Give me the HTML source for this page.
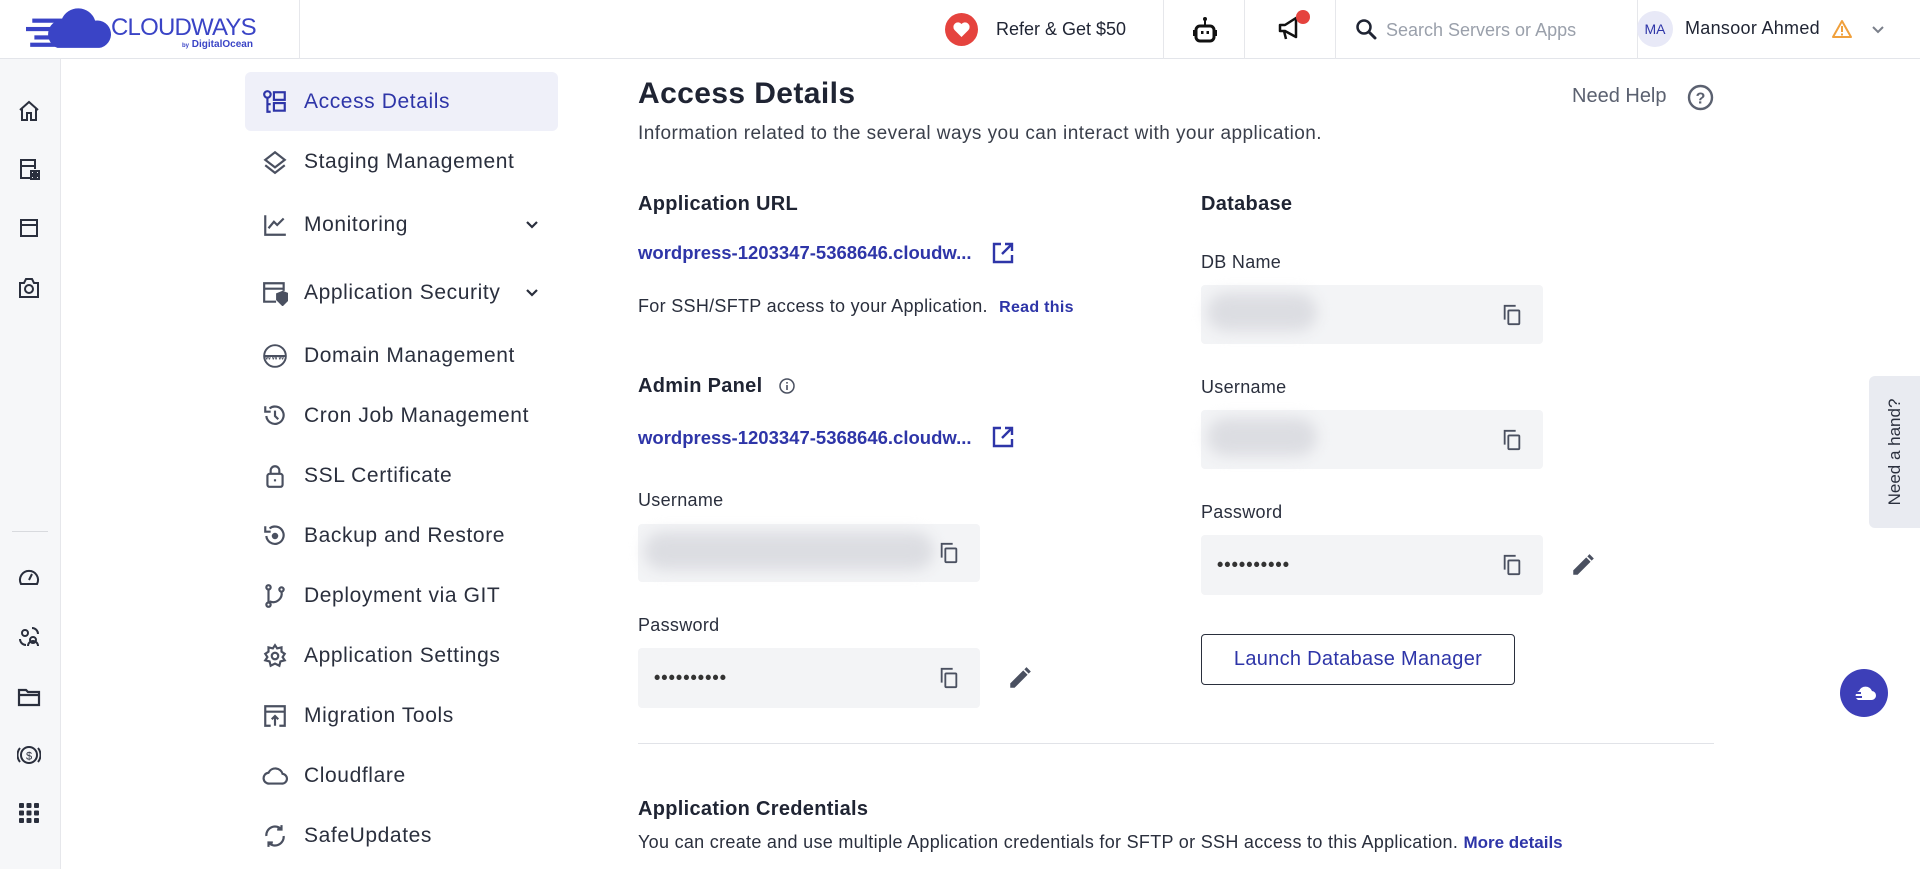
<!DOCTYPE html>
<html><head><meta charset="utf-8"><style>
*{box-sizing:border-box;margin:0;padding:0}
body{width:1920px;height:869px;overflow:hidden;background:#fff;font-family:"Liberation Sans",sans-serif;color:#1f2433;position:relative}
.abs{position:absolute}
.hdr{left:0;top:0;width:1920px;height:59px;border-bottom:1px solid #e3e5ea;background:#fff}
.vd{position:absolute;top:0;width:1px;height:59px;background:#e6e7eb}
.rail{left:0;top:59px;width:61px;height:810px;background:#f6f7f9;border-right:1px solid #e6e7eb}
.ri{position:absolute;left:17px;width:24px;height:24px}
.nav{left:245px;width:313px;height:59px;display:flex;align-items:center;font-size:21px;letter-spacing:0.6px;color:#2a2f3d}
.nav svg{width:26px;height:26px;margin:0 16px 0 17px;flex:none}
.nav .chev{position:absolute;right:18px;width:16px;height:16px;margin:0}
.lbl{font-size:18px;color:#2a2f3d;letter-spacing:0.3px}
.h3{font-size:20px;font-weight:bold;color:#1f2433;letter-spacing:0.3px}
.link{font-size:18.5px;color:#2e35a8;font-weight:bold}
.inp{background:#f3f4f6;border-radius:4px}
.blur{position:absolute;left:6px;top:8px;height:38px;border-radius:20px;background:#dcdde2;filter:blur(7px)}
.dots{position:absolute;left:16px;top:50%;transform:translateY(-50%);font-size:18px;letter-spacing:1px;color:#333;font-weight:bold}
.cp{position:absolute;right:20px;top:50%;transform:translateY(-50%);width:22px;height:22px}
</style></head><body>
<div class="abs hdr">
 <svg class="abs" style="left:26px;top:6px" width="88" height="44" viewBox="0 0 84 42"><path d="M30 40 A14 14 0 0 1 34 13 A17 17 0 0 1 66 14 A13 13 0 0 1 70 40 Z" fill="#3a44c6"/><rect x="6" y="12" width="30" height="4" fill="#3a44c6"/><rect x="0" y="20" width="28" height="4" fill="#3a44c6"/><rect x="8" y="28" width="24" height="4" fill="#3a44c6"/><rect x="4" y="35" width="28" height="4" fill="#3a44c6"/></svg>
 <div class="abs" style="left:111px;top:14px;font-size:24px;color:#3a44c6;letter-spacing:-0.8px">CLOUDWAYS</div>
 <div class="abs" style="left:182px;top:39px;font-size:10px;color:#3a44c6;font-weight:bold"><span style="font-size:6px">by</span> DigitalOcean</div>
 <div class="vd" style="left:299px"></div>
 <svg class="abs" style="left:945px;top:13px" width="33" height="33" viewBox="0 0 33 33"><circle cx="16.5" cy="16.5" r="16.5" fill="#e5433e"/><path d="M16.5 24 L9.5 17 A4 4 0 0 1 16.5 11 A4 4 0 0 1 23.5 17 Z" fill="#fff"/></svg>
 <div class="abs" style="left:996px;top:19px;font-size:18px;color:#1f2433">Refer &amp; Get $50</div>
 <div class="vd" style="left:1163px"></div>
 <svg class="abs" style="left:1193px;top:16px" width="24" height="28" viewBox="0 0 24 28"><circle cx="12" cy="3" r="2" fill="#111"/><rect x="11" y="4" width="2" height="6" fill="#111"/><rect x="3" y="10" width="18" height="15" rx="4" fill="none" stroke="#111" stroke-width="3"/><rect x="8" y="15" width="2.5" height="3" fill="#111"/><rect x="13.5" y="15" width="2.5" height="3" fill="#111"/><rect x="0" y="14" width="3" height="6" fill="#111"/><rect x="21" y="14" width="3" height="6" fill="#111"/></svg>
 <div class="vd" style="left:1244px"></div>
 <svg class="abs" style="left:1277px;top:10px" width="36" height="34" viewBox="0 0 36 34"><path d="M3 15 h5 l11-7 v19 l-11-6 h-5 z M7 21 l2 8" fill="none" stroke="#111" stroke-width="2.5" stroke-linejoin="round"/><circle cx="26" cy="7" r="7" fill="#e5433e"/></svg>
 <div class="vd" style="left:1335px"></div>
 <svg class="abs" style="left:1355px;top:18px" width="22" height="22" viewBox="0 0 22 22"><circle cx="9" cy="9" r="6.5" fill="none" stroke="#1f2433" stroke-width="2.5"/><path d="M14 14 L20 20" stroke="#1f2433" stroke-width="3" stroke-linecap="round"/></svg>
 <div class="abs" style="left:1386px;top:20px;font-size:18px;color:#9aa0ab">Search Servers or Apps</div>
 <div class="vd" style="left:1637px"></div>
 <div class="abs" style="left:1637px;top:11px;width:36px;height:36px;border-radius:50%;background:#e8e9f7;color:#2e35a8;font-size:14px;text-align:center;line-height:36px">MA</div>
 <div class="abs" style="left:1685px;top:18px;font-size:18px;color:#1f2433;letter-spacing:0.3px">Mansoor Ahmed</div>
 <svg class="abs" style="left:1831px;top:19px" width="22" height="20" viewBox="0 0 22 20"><path d="M11 2 L20 18 H2 Z" fill="none" stroke="#f0a03c" stroke-width="2" stroke-linejoin="round"/><rect x="10" y="7" width="2" height="6" fill="#f0a03c"/><rect x="10" y="14.5" width="2" height="2" fill="#f0a03c"/></svg>
 <svg class="abs" style="left:1871px;top:25px" width="14" height="10" viewBox="0 0 14 10"><path d="M2 2 L7 7 L12 2" fill="none" stroke="#7a7f8a" stroke-width="2"/></svg>
</div>

<div class="abs rail">
 <svg class="ri" style="top:40px" viewBox="0 0 24 24" fill="none" stroke="#2a2f3d" stroke-width="2"><path d="M3 11 L12 3 L21 11 M5 9 V21 H10 V14 H14 V21 H19 V9"/></svg>
 <svg class="ri" style="top:98px" viewBox="0 0 24 24" fill="none" stroke="#2a2f3d" stroke-width="2"><path d="M13 21 H4 V3 H18 V12 M4 9 H18"/><rect x="14" y="14" width="3" height="3"/><rect x="19" y="14" width="3" height="3"/><rect x="14" y="19" width="3" height="3"/><rect x="19" y="19" width="3" height="3"/></svg>
 <svg class="ri" style="top:157px" viewBox="0 0 24 24" fill="none" stroke="#2a2f3d" stroke-width="2"><rect x="4" y="4" width="16" height="16"/><path d="M4 9 H20"/></svg>
 <svg class="ri" style="top:217px" viewBox="0 0 24 24" fill="none" stroke="#2a2f3d" stroke-width="2"><path d="M3 7 H7 L9 3 H15 L17 7 H21 V21 H3 Z"/><circle cx="12" cy="13" r="4"/></svg>
 <div class="abs" style="left:12px;top:472px;width:36px;height:1px;background:#d8dade"></div>
 <svg class="ri" style="top:506px" viewBox="0 0 24 24" fill="none" stroke="#2a2f3d" stroke-width="2"><path d="M4 19 A9 9 0 1 1 20 19 Z M12 15 L15 9"/></svg>
 <svg class="ri" style="top:566px" viewBox="0 0 24 24" fill="none" stroke="#2a2f3d" stroke-width="2"><circle cx="8" cy="8" r="3"/><circle cx="16" cy="15" r="3"/><path d="M11 21 A5 5 0 0 1 21 21 M3 14 A6 6 0 0 0 9 20 M15 3 A6 6 0 0 1 21 9"/></svg>
 <svg class="ri" style="top:626px" viewBox="0 0 24 24" fill="none" stroke="#2a2f3d" stroke-width="2.2"><path d="M2 5 H9 L11 7 H22 V20 H2 Z M2 10 H22"/></svg>
 <svg class="ri" style="top:684px" viewBox="0 0 24 24" fill="none" stroke="#2a2f3d" stroke-width="2"><circle cx="12" cy="12" r="8"/><path d="M3 5 A11 11 0 0 0 3 19 M21 5 A11 11 0 0 1 21 19"/><text x="12" y="16.5" font-size="11" text-anchor="middle" fill="#2a2f3d" stroke="none" font-family="Liberation Sans">$</text></svg>
 <svg class="ri" style="top:742px" viewBox="0 0 24 24" fill="#2a2f3d"><rect x="2" y="2" width="5" height="5" rx="1"/><rect x="9.5" y="2" width="5" height="5" rx="1"/><rect x="17" y="2" width="5" height="5" rx="1"/><rect x="2" y="9.5" width="5" height="5" rx="1"/><rect x="9.5" y="9.5" width="5" height="5" rx="1"/><rect x="17" y="9.5" width="5" height="5" rx="1"/><rect x="2" y="17" width="5" height="5" rx="1"/><rect x="9.5" y="17" width="5" height="5" rx="1"/><rect x="17" y="17" width="5" height="5" rx="1"/></svg>
</div>

<div class="abs" style="left:245px;top:72px;width:313px;height:59px;background:#eff0f9;border-radius:6px"></div>
<div class="abs nav" style="top:72px;color:#2e35a8"><svg viewBox="0 0 24 24" fill="none" stroke="#2e35a8" stroke-width="2"><circle cx="5" cy="5" r="3"/><path d="M5 8 V21 H8 M5 14 H8"/><rect x="11" y="3" width="10" height="7"/><rect x="11" y="13" width="10" height="7"/></svg>Access Details</div>
<div class="abs nav" style="top:132px"><svg viewBox="0 0 24 24" fill="none" stroke="#4a5060" stroke-width="2"><path d="M12 3 L21 10 L12 17 L3 10 Z M3 15 L12 22 L21 15"/></svg>Staging Management</div>
<div class="abs nav" style="top:195px"><svg viewBox="0 0 24 24" fill="none" stroke="#4a5060" stroke-width="2"><path d="M3 3 V21 H22 M6 15 L11 9 L14 12 L20 6"/></svg>Monitoring<svg class="chev" viewBox="0 0 16 16"><path d="M3 5 L8 10 L13 5" fill="none" stroke="#2a2f3d" stroke-width="2.2"/></svg></div>
<div class="abs nav" style="top:263px"><svg viewBox="0 0 24 24" fill="none" stroke="#4a5060" stroke-width="2"><path d="M13 20 H2 V3 H20 V10 M2 8 H20"/><path d="M14 13 L19 11 L24 13 V18 L19 23 L14 18 Z" fill="#4a5060"/></svg>Application Security<svg class="chev" viewBox="0 0 16 16"><path d="M3 5 L8 10 L13 5" fill="none" stroke="#2a2f3d" stroke-width="2.2"/></svg></div>
<div class="abs nav" style="top:326px"><svg viewBox="0 0 24 24" fill="none" stroke="#4a5060" stroke-width="1.8"><circle cx="12" cy="12" r="10"/><path d="M2 12 H22"/><text x="12" y="15" font-size="7" text-anchor="middle" fill="#4a5060" stroke="none" font-family="Liberation Sans" font-weight="bold">www</text></svg>Domain Management</div>
<div class="abs nav" style="top:386px"><svg viewBox="0 0 24 24" fill="none" stroke="#4a5060" stroke-width="2"><path d="M4 12 A8 8 0 1 0 7 5 M3 3 V8 H8 M12 7 V12 L15 15"/></svg>Cron Job Management</div>
<div class="abs nav" style="top:446px"><svg viewBox="0 0 24 24" fill="none" stroke="#4a5060" stroke-width="2"><rect x="5" y="10" width="14" height="12" rx="2"/><path d="M8 10 V7 A4 4 0 0 1 16 7 V10 M12 15 V17"/></svg>SSL Certificate</div>
<div class="abs nav" style="top:506px"><svg viewBox="0 0 24 24" fill="none" stroke="#4a5060" stroke-width="2"><path d="M4 12 A8 8 0 1 0 7 5 M3 3 V8 H8"/><circle cx="12" cy="12" r="2" fill="#4a5060"/></svg>Backup and Restore</div>
<div class="abs nav" style="top:566px"><svg viewBox="0 0 24 24" fill="none" stroke="#4a5060" stroke-width="2"><circle cx="6" cy="4" r="2"/><circle cx="6" cy="20" r="2"/><circle cx="18" cy="6" r="2"/><path d="M6 6 V18 M18 8 A8 8 0 0 1 7 17"/></svg>Deployment via GIT</div>
<div class="abs nav" style="top:626px"><svg viewBox="0 0 24 24" fill="none" stroke="#4a5060" stroke-width="2"><circle cx="12" cy="12" r="3"/><path d="M12 2 L14 5 L18 4 L18 8 L21 10 L19 13 L21 16 L17 17 L16 21 L12 19 L8 21 L7 17 L3 16 L5 13 L3 10 L6 8 L6 4 L10 5 Z"/></svg>Application Settings</div>
<div class="abs nav" style="top:686px"><svg viewBox="0 0 24 24" fill="none" stroke="#4a5060" stroke-width="2"><path d="M8 21 H3 V3 H21 V21 H16 M3 8 H21 M12 21 V12 M9 15 L12 12 L15 15"/></svg>Migration Tools</div>
<div class="abs nav" style="top:746px"><svg viewBox="0 0 24 24" fill="none" stroke="#4a5060" stroke-width="2"><path d="M7 19 A5 5 0 0 1 6 9 A7 7 0 0 1 19 10 A4.5 4.5 0 0 1 18 19 Z"/></svg>Cloudflare</div>
<div class="abs nav" style="top:806px"><svg viewBox="0 0 24 24" fill="none" stroke="#4a5060" stroke-width="2"><path d="M4 12 A8 8 0 0 1 18 6 M20 12 A8 8 0 0 1 6 18 M18 2 V6 H14 M6 22 V18 H10"/></svg>SafeUpdates</div>

<div class="abs" style="left:638px;top:77px;font-size:30px;font-weight:bold;color:#1f2433;letter-spacing:0.4px">Access Details</div>
<div class="abs" style="left:638px;top:123px;font-size:19px;color:#3a3f4b;letter-spacing:0.45px">Information related to the several ways you can interact with your application.</div>
<div class="abs" style="left:1572px;top:85px;font-size:20px;color:#5b6170">Need Help</div>
<svg class="abs" style="left:1687px;top:84px" width="27" height="27" viewBox="0 0 27 27"><circle cx="13.5" cy="13.5" r="11.5" fill="none" stroke="#5b6170" stroke-width="2.4"/><text x="13.5" y="19.5" font-size="16" font-weight="bold" text-anchor="middle" fill="#5b6170" font-family="Liberation Sans">?</text></svg>

<div class="abs h3" style="left:638px;top:193px">Application URL</div>
<div class="abs link" style="left:638px;top:242px">wordpress-1203347-5368646.cloudw...</div>
<svg class="abs" style="left:991px;top:241px" width="24" height="24" viewBox="0 0 24 24" fill="none" stroke="#2e35a8" stroke-width="2.4"><path d="M10 3 H3 V21 H21 V14 M14 3 H21 V10 M21 3 L11 13"/></svg>
<div class="abs" style="left:638px;top:296px;font-size:18px;color:#2a2f3d;letter-spacing:0.3px">For SSH/SFTP access to your Application. <span style="margin-left:6px;font-size:16px;color:#2e35a8;font-weight:bold">Read this</span></div>

<div class="abs h3" style="left:638px;top:375px">Admin Panel</div>
<svg class="abs" style="left:778px;top:377px" width="18" height="18" viewBox="0 0 18 18"><circle cx="9" cy="9" r="7" fill="none" stroke="#4a5060" stroke-width="1.5"/><rect x="8.2" y="8" width="1.6" height="5" fill="#4a5060"/><rect x="8.2" y="5" width="1.6" height="1.6" fill="#4a5060"/></svg>
<div class="abs link" style="left:638px;top:427px">wordpress-1203347-5368646.cloudw...</div>
<svg class="abs" style="left:991px;top:425px" width="24" height="24" viewBox="0 0 24 24" fill="none" stroke="#2e35a8" stroke-width="2.4"><path d="M10 3 H3 V21 H21 V14 M14 3 H21 V10 M21 3 L11 13"/></svg>

<div class="abs lbl" style="left:638px;top:490px">Username</div>
<div class="abs inp" style="left:638px;top:524px;width:342px;height:58px"><div class="blur" style="width:290px"></div><svg class="cp" viewBox="0 0 24 24" fill="none" stroke="#4a5060" stroke-width="2"><rect x="8" y="7" width="12" height="15" rx="1"/><path d="M4 17 V2 H16"/></svg></div>
<div class="abs lbl" style="left:638px;top:615px">Password</div>
<div class="abs inp" style="left:638px;top:648px;width:342px;height:60px"><div class="dots">••••••••••</div><svg class="cp" viewBox="0 0 24 24" fill="none" stroke="#4a5060" stroke-width="2"><rect x="8" y="7" width="12" height="15" rx="1"/><path d="M4 17 V2 H16"/></svg></div>
<svg class="abs" style="left:1007px;top:665px" width="26" height="26" viewBox="0 0 24 24"><path d="M3 21 V17 L15 5 L19 9 L7 21 Z M16 4 L18 2 L22 6 L20 8 Z" fill="#4a5060"/></svg>

<div class="abs h3" style="left:1201px;top:193px">Database</div>
<div class="abs lbl" style="left:1201px;top:252px">DB Name</div>
<div class="abs inp" style="left:1201px;top:285px;width:342px;height:59px"><div class="blur" style="width:110px"></div><svg class="cp" viewBox="0 0 24 24" fill="none" stroke="#4a5060" stroke-width="2"><rect x="8" y="7" width="12" height="15" rx="1"/><path d="M4 17 V2 H16"/></svg></div>
<div class="abs lbl" style="left:1201px;top:377px">Username</div>
<div class="abs inp" style="left:1201px;top:410px;width:342px;height:59px"><div class="blur" style="width:110px"></div><svg class="cp" viewBox="0 0 24 24" fill="none" stroke="#4a5060" stroke-width="2"><rect x="8" y="7" width="12" height="15" rx="1"/><path d="M4 17 V2 H16"/></svg></div>
<div class="abs lbl" style="left:1201px;top:502px">Password</div>
<div class="abs inp" style="left:1201px;top:535px;width:342px;height:60px"><div class="dots">••••••••••</div><svg class="cp" viewBox="0 0 24 24" fill="none" stroke="#4a5060" stroke-width="2"><rect x="8" y="7" width="12" height="15" rx="1"/><path d="M4 17 V2 H16"/></svg></div>
<svg class="abs" style="left:1570px;top:552px" width="26" height="26" viewBox="0 0 24 24"><path d="M3 21 V17 L15 5 L19 9 L7 21 Z M16 4 L18 2 L22 6 L20 8 Z" fill="#4a5060"/></svg>
<div class="abs" style="left:1201px;top:634px;width:314px;height:51px;border:1.5px solid #2a2f3d;border-radius:4px;font-size:20px;color:#2e35a8;text-align:center;line-height:48px;letter-spacing:0.3px">Launch Database Manager</div>

<div class="abs" style="left:638px;top:743px;width:1076px;height:1px;background:#e1e3e8"></div>
<div class="abs h3" style="left:638px;top:798px">Application Credentials</div>
<div class="abs" style="left:638px;top:832px;font-size:18px;color:#2a2f3d;letter-spacing:0.3px">You can create and use multiple Application credentials for SFTP or SSH access to this Application. <span style="color:#2e35a8;font-weight:bold;font-size:17px;letter-spacing:0">More details</span></div>

<div class="abs" style="left:1869px;top:376px;width:51px;height:152px;background:#e9ebf1;border-radius:6px 0 0 6px"></div>
<div class="abs" style="left:1895px;top:452px;transform:translate(-50%,-50%) rotate(-90deg);font-size:17px;color:#2a2f3d;white-space:nowrap">Need a hand?</div>
<div class="abs" style="left:1840px;top:669px;width:48px;height:48px;border-radius:50%;background:#3d3fb8"></div>
<svg class="abs" style="left:1850px;top:680px" width="30" height="24" viewBox="0 0 30 24"><path d="M8 20 A5 5 0 0 1 9 11 A7 7 0 0 1 22 11 A4.5 4.5 0 0 1 21 20 Z" fill="#fff"/><rect x="2" y="12" width="9" height="2" fill="#3d3fb8"/><rect x="4" y="16" width="8" height="2" fill="#3d3fb8"/></svg>
</body></html>
